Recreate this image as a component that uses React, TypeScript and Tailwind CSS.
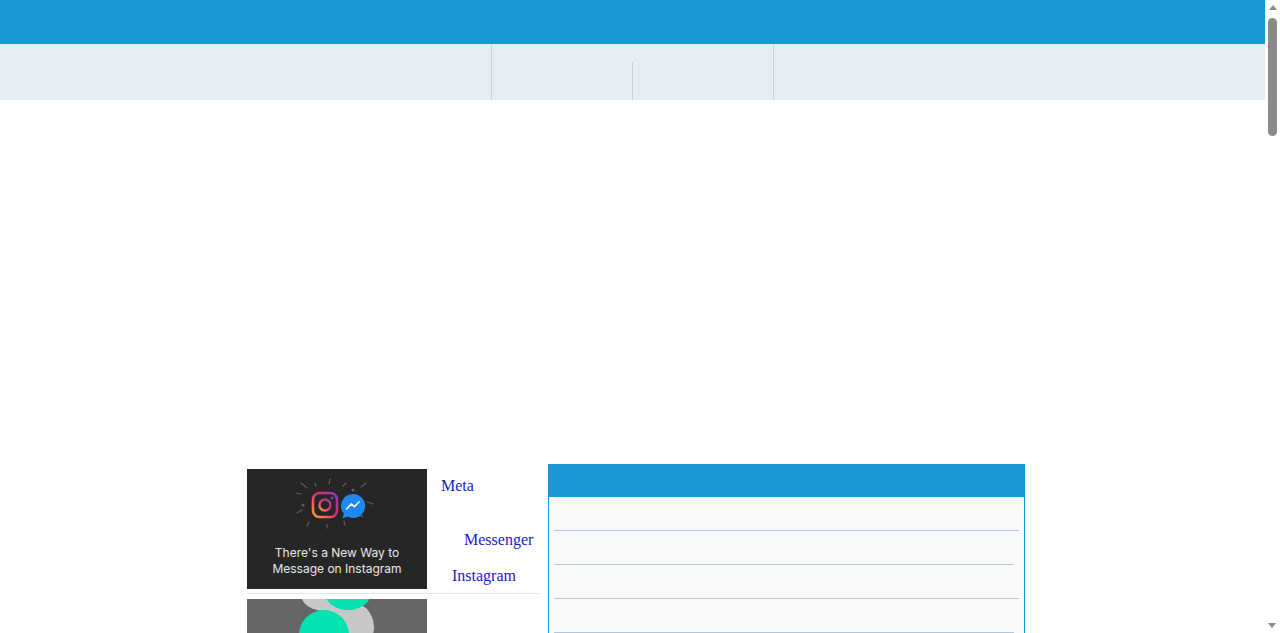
import React from 'react';

function PromoImage() {
    return (
        <div className="relative h-[120px] w-[180px] shrink-0 bg-[#262626]">
            <svg className="absolute left-0 top-0" width="180" height="80" viewBox="0 0 180 80">
                <defs>
                    <linearGradient id="ig" x1="0" y1="1" x2="1" y2="0">
                        <stop offset="0" stopColor="#f9a23a" />
                        <stop offset="0.5" stopColor="#e1306c" />
                        <stop offset="1" stopColor="#8a3ab9" />
                    </linearGradient>
                </defs>
                <g stroke="#5e5e5e" strokeWidth="1.2" strokeLinecap="round">
                    <line x1="54" y1="14" x2="60" y2="19" />
                    <line x1="49" y1="24" x2="54" y2="25" />
                    <line x1="68" y1="14" x2="69" y2="17" />
                    <line x1="83" y1="10" x2="82" y2="15" />
                    <line x1="96" y1="17" x2="99" y2="14" />
                    <line x1="114" y1="18" x2="119" y2="14" />
                    <line x1="120" y1="33" x2="126" y2="35" />
                    <line x1="112" y1="45" x2="116" y2="48" />
                    <line x1="97" y1="52" x2="98" y2="56" />
                    <line x1="80" y1="55" x2="80" y2="59" />
                    <line x1="62" y1="53" x2="60" y2="57" />
                    <line x1="55" y1="41" x2="50" y2="44" />
                </g>
                <circle cx="56" cy="36" r="1.5" fill="#5e5e5e" />
                <circle cx="106" cy="21" r="1.5" fill="#5e5e5e" />
                <rect x="66" y="24" width="24" height="24" rx="6.5" fill="none" stroke="url(#ig)" strokeWidth="2.6" />
                <circle cx="78" cy="36" r="5.5" fill="none" stroke="url(#ig)" strokeWidth="2.4" />
                <circle cx="85" cy="29" r="1.5" fill="#8a3ab9" />
                <path d="M106 25 a12 12 0 1 1 -5.5 22.6 l-5 1.8 l1.3 -4.8 a12 12 0 0 1 9.2 -19.6z" fill="#1e88f0" />
                <path d="M99.5 40 l4.8 -5.2 l3.2 2.6 l4.8 -4.8 l-4.8 5.2 l-3.2 -2.6z" fill="#fff" stroke="#fff" strokeWidth="1.3" strokeLinejoin="round" />
            </svg>
            <div className="absolute inset-x-0 bottom-[12px] text-center font-['Inter',sans-serif] text-[12px] leading-[16px] text-[#e8e8e8]">
                There's a New Way to
                <br />
                Message on Instagram
            </div>
        </div>
    );
}

function SecondImage() {
    return (
        <div className="relative h-[34px] w-[180px] shrink-0 overflow-hidden bg-[#666666]">
            <svg className="absolute left-0 top-0" width="180" height="34" viewBox="0 0 180 34">
                <ellipse cx="78" cy="-4" rx="24" ry="16" fill="#c8c8c8" />
                <circle cx="101" cy="28" r="26" fill="#c8c8c8" />
                <ellipse cx="101" cy="-6" rx="23" ry="17" fill="#00e3b0" />
                <circle cx="77" cy="36" r="25" fill="#00e3b0" />
            </svg>
        </div>
    );
}

function Scrollbar() {
    return (
        <div className="fixed right-0 top-0 z-10 h-screen w-[15px] bg-white">
            <div className="mx-auto mt-[5px] h-0 w-0 border-x-[4px] border-b-[5px] border-x-transparent border-b-[#8a8a8a]" />
            <div className="mx-auto mt-[8px] h-[118px] w-[9px] rounded-full bg-[#8a8a8a]" />
            <div className="absolute bottom-[5px] left-[3px] h-0 w-0 border-x-[4px] border-t-[5px] border-x-transparent border-t-[#8a8a8a]" />
        </div>
    );
}

export default function App() {
    const rows = [0, 1, 2, 3, 4, 5, 6, 7];

    return (
        <div className="min-h-[3240px] w-[1265px] bg-white font-['Liberation_Serif',serif]">
            <Scrollbar />
            <div className="h-[44px] bg-[#1a96d2]" />
            <div className="flex h-[56px] bg-[#e5edf4]">
                <div className="w-[491px]" />
                <div className="flex w-[283px] border-x border-[#c9d1d9]">
                    <div className="w-[140px]" />
                    <div className="mt-[18px] w-px bg-[#c9d1d9]" />
                </div>
            </div>

            <div className="h-[364px]" />

            <div className="mx-auto flex w-[785px] pl-[7px]">
                <div className="w-[293px] pt-[5px]">
                    <div className="flex border-b border-[#e6e6e6] pb-[4px]">
                        <PromoImage />
                        <div className="relative flex-1 text-[16px] text-[#1a1acc]">
                            <a className="absolute left-[14px] top-[5px]">Meta</a>
                            <a className="absolute left-[37px] top-[59px]">Messenger</a>
                            <a className="absolute left-[25px] top-[95px]">Instagram</a>
                        </div>
                    </div>
                    <div className="mt-[5px] flex">
                        <SecondImage />
                    </div>
                </div>

                <div className="ml-[8px] w-[477px] border border-[#1a96d2] bg-[#f8f9fa]">
                    <div className="h-[32px] bg-[#1a96d2]" />
                    <div className="px-[5px]">
                        {rows.map((r) => (
                            <div
                                key={r}
                                className={
                                    r % 2 === 0
                                        ? 'h-[34px] border-b border-[#b3c6d9]'
                                        : 'mr-[5px] h-[34px] border-b border-[#b3c6d9]'
                                }
                            />
                        ))}
                    </div>
                </div>
            </div>
        </div>
    );
}
